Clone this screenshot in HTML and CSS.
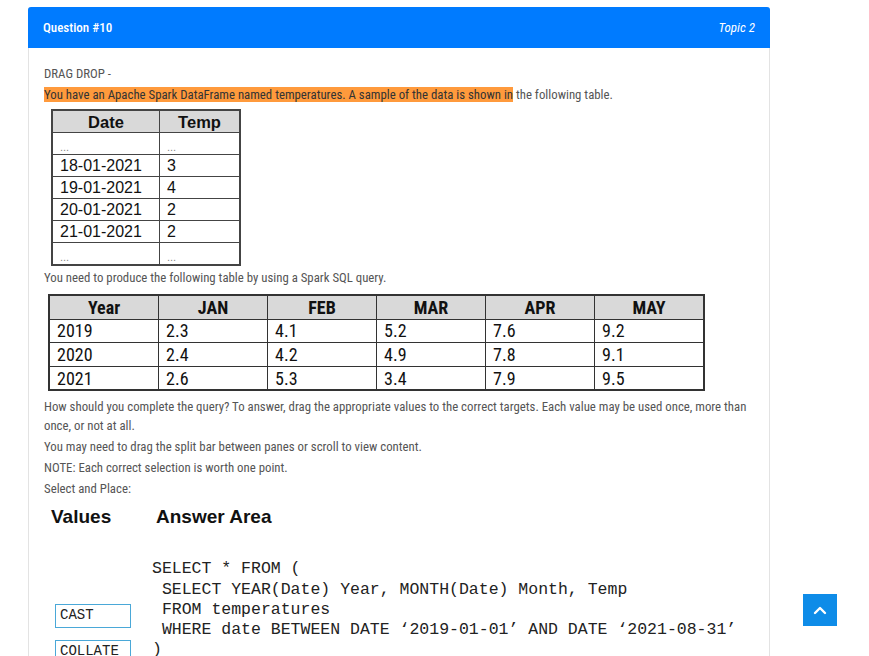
FILE: index.html
```html
<!DOCTYPE html>
<html>
<head>
<meta charset="utf-8">
<link rel="stylesheet" href="styles.css">
</head>
<body>
<div class="card">
  <div class="card-header">
    <span class="q-title">Question #10</span>
    <span class="q-topic">Topic 2</span>
  </div>
  <div class="card-body">
    <p>DRAG DROP -</p>
    <p><mark>You have an Apache Spark DataFrame named temperatures. A sample of the data is shown in</mark> the following table.</p>
    <table class="tbl-date">
      <tr><th>Date</th><th>Temp</th></tr>
      <tr class="dots"><td>...</td><td>...</td></tr>
      <tr><td>18-01-2021</td><td>3</td></tr>
      <tr><td>19-01-2021</td><td>4</td></tr>
      <tr><td>20-01-2021</td><td>2</td></tr>
      <tr><td>21-01-2021</td><td>2</td></tr>
      <tr class="dots"><td>...</td><td>...</td></tr>
    </table>
    <p>You need to produce the following table by using a Spark SQL query.</p>
    <table class="tbl-year">
      <tr><th>Year</th><th>JAN</th><th>FEB</th><th>MAR</th><th>APR</th><th>MAY</th></tr>
      <tr><td>2019</td><td>2.3</td><td>4.1</td><td>5.2</td><td>7.6</td><td>9.2</td></tr>
      <tr><td>2020</td><td>2.4</td><td>4.2</td><td>4.9</td><td>7.8</td><td>9.1</td></tr>
      <tr><td>2021</td><td>2.6</td><td>5.3</td><td>3.4</td><td>7.9</td><td>9.5</td></tr>
    </table>
    <p>How should you complete the query? To answer, drag the appropriate values to the correct targets. Each value may be used once, more than once, or not at all.</p>
    <p>You may need to drag the split bar between panes or scroll to view content.</p>
    <p>NOTE: Each correct selection is worth one point.</p>
    <p>Select and Place:</p>
    <div class="dd">
      <div class="dd-values">
        <div class="dd-title">Values</div>
        <div class="chip chip-first">CAST</div>
        <div class="chip">COLLATE</div>
      </div>
      <div class="dd-answer">
        <div class="dd-title dd-title-answer">Answer Area</div>
        <pre class="sql">SELECT * FROM (
 SELECT YEAR(Date) Year, MONTH(Date) Month, Temp
 FROM temperatures
 WHERE date BETWEEN DATE ‘2019-01-01’ AND DATE ‘2021-08-31’
)</pre>
      </div>
    </div>
  </div>
</div>
<a class="to-top" href="#">
  <svg width="14" height="10" viewBox="0 0 14 10"><path d="M2 8 L7 3 L12 8" fill="none" stroke="#fff" stroke-width="2.4" stroke-linecap="round" stroke-linejoin="round"/></svg>
</a>
</body>
</html>
```
FILE: styles.css
```css
html, body { margin: 0; padding: 0; background: #fff; }
body {
  font-family: "Roboto Condensed", "Liberation Sans Narrow", Roboto, sans-serif;
  font-size: 12.8px;
  color: #555;
  padding: 7px 0 0 28px;
}
.card {
  width: 742px;
  box-sizing: border-box;
  border: 1px solid #e3e3e3;
  border-top: none;
  border-radius: 3px 3px 0 0;
  min-height: 700px;
}
.card-header {
  background: #007bff;
  color: #fff;
  height: 41px;
  display: flex;
  align-items: center;
  justify-content: space-between;
  padding: 0 15px 0 15px;
  margin: 0 -1px;
  border-radius: 3px 3px 0 0;
  font-size: 13px;
}
.q-title { font-weight: 500; }
.q-topic { font-style: italic; }
.card-body { padding: 16px 15px 0 15px; }
p { margin: 0 0 2px 0; line-height: 19px; }
mark { background: #ff9a3c; color: #333; padding: 0; }
.tbl-date {
  border-collapse: collapse;
  margin: 5px 0 2px 7px;
  font-family: "Liberation Sans", Arial, sans-serif;
  color: #111;
  border: 2px solid #444;
}
.tbl-date th, .tbl-date td {
  border: 1.5px solid #444;
  height: 21px;
  padding: 0 0 0 7px;
  font-size: 16px;
  line-height: 20px;
  text-align: left;
}
.tbl-date th {
  background: #d9d9d9;
  text-align: center;
  font-size: 16.5px;
  padding: 0;
}
.tbl-date th:first-child, .tbl-date td:first-child { width: 99px; }
.tbl-date th:last-child, .tbl-date td:last-child { width: 72px; }
.tbl-date .dots td { font-size: 11px; color: #888; line-height: 14px; vertical-align: bottom; }
.tbl-year {
  border-collapse: collapse;
  margin: 7px 0 6px 4px;
  font-family: "Roboto Condensed", "Liberation Sans", Arial, sans-serif;
  color: #111;
  border: 2px solid #333;
}
.tbl-year th, .tbl-year td {
  border: 1px solid #333;
  width: 101px;
  height: 22.6px;
  padding: 0 0 0 7px;
  font-size: 18px;
  line-height: 21px;
  text-align: left;
}
.tbl-year th {
  background: #d9d9d9;
  text-align: center;
  padding: 0;
  width: 108px;
  font-weight: bold;
}
.dd {
  display: flex;
  margin: 6px 0 0 7px;
  color: #111;
}
.dd-title {
  font-family: "Liberation Sans", Arial, sans-serif;
  font-weight: bold;
  font-size: 19px;
  line-height: 26px;
}
.dd-title-answer { padding-left: 4px; }
.dd-values { width: 105px; display: flex; flex-direction: column; }
.chip {
  width: 76px;
  height: 24px;
  box-sizing: border-box;
  border: 1.5px solid #4aa8d8;
  font-family: "Liberation Mono", "Courier New", monospace;
  font-size: 14px;
  line-height: 21px;
  padding-left: 4px;
  margin-left: 4px;
  color: #222;
}
.chip-first { margin-top: 74px; margin-bottom: 12px; }
.dd-answer { margin-left: -4px; }
.sql {
  margin: 29px 0 0 0;
  font-family: "Liberation Mono", "Courier New", monospace;
  font-size: 16.5px;
  line-height: 20.2px;
  color: #222;
}
.to-top {
  position: fixed;
  left: 803px;
  top: 594px;
  width: 34px;
  height: 32px;
  background: #0e8ce8;
  display: flex;
  align-items: center;
  justify-content: center;
}
```
